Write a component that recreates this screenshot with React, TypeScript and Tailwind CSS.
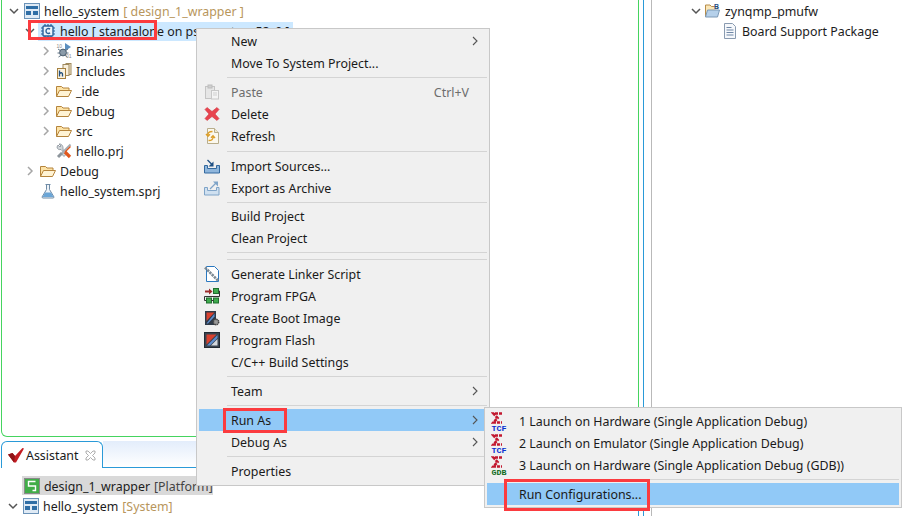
import type { ReactNode } from 'react'

// ── Icons ──────────────────────────────────────────────────────────────────
function Svg({ children }: { children: ReactNode }) {
  return <svg width="16" height="16" viewBox="0 0 16 16" className="shrink-0 block">{children}</svg>
}

const SystemIcon = () => (
  <Svg>
    <rect x="0.5" y="0.5" width="15" height="15" fill="#dfeaf5" stroke="#6c93b8" />
    <rect x="2" y="3" width="12" height="3" fill="#2f6ea6" />
    <rect x="2" y="8" width="5" height="4" fill="#2f6ea6" />
    <rect x="9" y="8" width="5" height="4" fill="#2f6ea6" />
  </Svg>
)

const AppIcon = () => (
  <Svg>
    <path d="M5 1v2M8 1v2M11 1v2M5 13v2M8 13v2M11 13v2M1 5h2M1 8h2M1 11h2M13 5h2M13 8h2M13 11h2" stroke="#2a6099" strokeWidth="1.2" />
    <rect x="3" y="3" width="10" height="10" rx="1" fill="#eef5fb" stroke="#2a6099" strokeWidth="1.4" />
    <path d="M10 6.2C9 5 6 5.2 6 8s3 3 4 1.8" fill="none" stroke="#2a6099" strokeWidth="1.4" />
  </Svg>
)

const BinariesIcon = () => (
  <Svg>
    <path d="M9 0l6 4-6 4z" fill="#5b8fc0" />
    <circle cx="7" cy="9.500" r="3.400" fill="#8a9aa8" stroke="#4d5f6e" />
    <path d="M2 6l3 2M1.500 10h2.500M2.500 14l3-2M12 6L9 8M12.500 10H10M11.500 14l-3-2" stroke="#5e7182" />
    <text x="0.500" y="5" fontSize="5" fill="#8b8b8b" fontFamily="Liberation Sans">10</text>
    <text x="10" y="15" fontSize="5" fill="#8b8b8b" fontFamily="Liberation Sans">01</text>
  </Svg>
)

const IncludesIcon = () => (
  <Svg>
    <rect x="10" y="0.500" width="5" height="11" fill="#f5e9cf" stroke="#a08a5e" />
    <rect x="7" y="1.500" width="6" height="11" fill="#f8efdc" stroke="#a08a5e" />
    <rect x="1.500" y="5.500" width="8" height="10" fill="#fbf3e0" stroke="#a5803f" />
    <path d="M3.500 7.500v6M3.500 10.500c2-1.500 3-.5 3 .5v2.500" fill="none" stroke="#22507f" strokeWidth="1.300" />
  </Svg>
)

const FolderIcon = () => (
  <Svg>
    <path d="M.500 13.500v-10h5l1.500 1.500h6v2.500" fill="#fde3a7" stroke="#b5843c" />
    <path d="M.500 13.500l3-6h12l-3 6z" fill="#fff3d4" stroke="#b5843c" strokeLinejoin="round" />
  </Svg>
)

const WrenchIcon = () => (
  <Svg>
    <path d="M3 1l2 2-1 1-2-2-1 2c0 2 2 3 4 2.500l3 3-2 2 2 2 2-2-1-1-1-1L7 6C7.500 2.500 5 .500 3 1z" fill="#d2d6da" stroke="#7a848e" strokeWidth=".7" />
    <path d="M14.500 1.500L6 10" stroke="#a7aeb5" strokeWidth="2" />
    <path d="M6 10l-4 4" stroke="#8d959c" strokeWidth="3" />
    <path d="M14.500 3.500L9 9" stroke="#e0571e" strokeWidth="1.200" />
    <path d="M9 9l5 5" stroke="#e0571e" strokeWidth="3.200" />
  </Svg>
)

const FlaskIcon = () => (
  <Svg>
    <path d="M5.500 1.500h5M6.500 1.500v5l-4.500 7.500c0 .8.500 1 1 1h10c.5 0 1-.2 1-1l-4.500-7.500v-5" fill="#eef3f8" stroke="#6f8ba6" />
    <path d="M5 9.500h6l2.500 4.500h-11z" fill="#6aa5d6" />
  </Svg>
)

const PasteIcon = () => (
  <Svg>
    <rect x="1.500" y="2.500" width="9" height="12" fill="#e6e6e6" stroke="#c4c4c4" />
    <rect x="4" y="1" width="4" height="3" fill="#d0d0d0" stroke="#bcbcbc" />
    <rect x="7.500" y="6.500" width="7" height="8.500" fill="#f4f4f4" stroke="#c8c8c8" />
    <path d="M9 9h4M9 11h4" stroke="#cfcfcf" />
  </Svg>
)

const DeleteIcon = () => (
  <Svg>
    <path d="M3 1.500L8 5.500l5-4 2 2-4 4.500 4 4.500-2 2-5-4-5 4-2-2 4-4.500-4-4.500z" fill="#e8444f" stroke="#d0363f" strokeWidth=".6" strokeLinejoin="round" />
  </Svg>
)

const RefreshIcon = () => (
  <Svg>
    <path d="M3.500 .500h7l4 4v11h-11z" fill="#fbf8ee" stroke="#b9ae8c" />
    <path d="M10.500 .500v4h4" fill="#f0e7cd" stroke="#b9ae8c" />
    <path d="M8.500 3.500C5 3.500 3.500 5 4 7.500M2 6l2 2.200L6 6.200" fill="none" stroke="#dd9f2a" strokeWidth="1.400" />
    <path d="M4.500 12.500c3.500 0 5-1.500 4.500-4M11 10L9 7.800 7 9.800" fill="none" stroke="#dd9f2a" strokeWidth="1.400" />
  </Svg>
)

const ImportIcon = () => (
  <Svg>
    <path d="M.500 7.500h3v3h9v-3h3v7.500h-15z" fill="#8fb6dc" stroke="#33699f" />
    <path d="M3.500 2l5 5" stroke="#1d4f83" strokeWidth="1.300" />
    <path d="M9.500 3.500v5h-5z" fill="#1d4f83" />
  </Svg>
)

const ExportIcon = () => (
  <Svg>
    <path d="M.500 7.500h3v3h9v-3h2.500v7.500h-14.500z" fill="#cfe0f0" stroke="#7fa4c8" />
    <path d="M6 9l6-6" stroke="#7fa4c8" strokeWidth="1.300" />
    <path d="M9 1.500h5v5z" fill="#7fa4c8" />
  </Svg>
)

const LinkerIcon = () => (
  <Svg>
    <path d="M2.500 .500h8l4 4v11h-12z" fill="#fff" stroke="#2a78c0" />
    <path d="M1 1.500l13 13" stroke="#7d8a94" strokeWidth="2.600" strokeDasharray="2.400 .8" />
  </Svg>
)

const FpgaIcon = () => (
  <Svg>
    <path d="M1 2.500h4V.500l3.500 3-3.500 3v-2h-4z" fill="#9c2b2b" />
    <rect x="9.500" y=".500" width="5" height="5" fill="#3eaa4d" stroke="#1f6f2e" />
    <path d="M14.500 3h1v5.500h-15v4h2" fill="none" stroke="#333" />
    <rect x="2.500" y="10" width="5" height="5" fill="#3eaa4d" stroke="#1f6f2e" />
    <rect x="9.500" y="10" width="5" height="5" fill="#3eaa4d" stroke="#1f6f2e" />
    <path d="M7.500 12.500h2" stroke="#333" />
  </Svg>
)

const BootIcon = () => (
  <Svg>
    <rect x="1" y="1" width="11" height="14" fill="#2f3a48" />
    <path d="M2.500 2.500h8L2.500 11z" fill="#d9412f" />
    <path d="M10.500 3.500v3L4 13.500H2.500z" fill="#5e8ed0" />
    <circle cx="12" cy="12" r="2.700" fill="#9a9a9a" stroke="#444" strokeDasharray="1.500 .6" strokeWidth="1.500" />
  </Svg>
)

const FlashIcon = () => (
  <Svg>
    <rect x=".500" y=".500" width="15" height="15" fill="#3a4450" stroke="#232a33" />
    <path d="M2.500 2.500h10l-10 10z" fill="#d9412f" />
    <path d="M13.500 3v3L6 13.500H3z" fill="#5e8ed0" />
    <path d="M13.500 7v6.500H7z" fill="#d5d9de" />
  </Svg>
)

function SigmaIcon({ label, color }: { label: string; color: string }) {
  return (
    <svg width="16" height="20" viewBox="0 0 16 20" className="shrink-0 block -ml-[2px]">
      <path d="M11 2.500H2.500L6.500 7l-4 4.500h8.500" fill="none" stroke="#c2182f" strokeWidth="2.700" strokeDasharray="3 1" />
      <text x="8" y="19.500" fontSize="8" fontWeight="700" textAnchor="middle" textLength="15" lengthAdjust="spacingAndGlyphs" fill={color} fontFamily="Liberation Mono">{label}</text>
    </svg>
  )
}

const AssistantIcon = () => (
  <Svg>
    <path d="M0 7.500l4.500-1.500 2.500 3L14.500 1l1.500 .5L8 15.500H6z" fill="#c31c22" />
    <path d="M6 15.500L0 7.500l4.500-1.500L7 9z" fill="#8f1417" />
  </Svg>
)

const PlatformIcon = () => (
  <Svg>
    <rect x=".500" y=".500" width="15" height="15" fill="#41ad49" stroke="#8a8a8a" />
    <path d="M11.500 3.500h-7v4.500h7v4.500h-3" fill="none" stroke="#fff" strokeWidth="1.400" />
  </Svg>
)

const BspFolderIcon = () => (
  <Svg>
    <path d="M1.500 14v-12h4.500l1.500 1.500h6v2" fill="#fbe7b8" stroke="#b78d4a" />
    <path d="M1.500 14l2-7h12l-2 7z" fill="#b5d0ea" stroke="#7c99b6" strokeLinejoin="round" />
    <text x="10" y="6" fontSize="7" fontWeight="700" fill="#1f4f86" fontFamily="Liberation Sans">B</text>
  </Svg>
)

const DocIcon = () => (
  <svg width="12" height="16" viewBox="0 0 12 16" className="shrink-0 block">
    <path d="M.500 .500h8l3 3v12h-11z" fill="#f6f8fb" stroke="#8a9bb0" />
    <path d="M2.500 4.500h5M2.500 7h7M2.500 9.500h7M2.500 12h7" stroke="#6f87a6" />
  </svg>
)

function Chevron({ open }: { open?: boolean }) {
  return (
    <svg width="10" height="10" viewBox="0 0 10 10" className="block">
      {open
        ? <path d="M1 3l4 4 4-4" fill="none" stroke="#555" strokeWidth="1.500" />
        : <path d="M3 1l4 4-4 4" fill="none" stroke="#a6a6a6" strokeWidth="1.500" />}
    </svg>
  )
}

const MenuArrow = () => (
  <svg width="6" height="10" viewBox="0 0 6 10" className="block ml-auto mr-[9px] shrink-0">
    <path d="M1 1l4 4-4 4" fill="none" stroke="#555" strokeWidth="1.100" />
  </svg>
)

// ── Tree ───────────────────────────────────────────────────────────────────
function TreeRow({ level = 0, chevron, icon, label, note, selected }: {
  level?: number
  chevron?: 'open' | 'closed'
  icon: ReactNode
  label: string
  note?: string
  selected?: boolean
}) {
  return (
    <div className="flex items-center h-5 whitespace-nowrap" style={{ paddingLeft: 7 + level * 16 }}>
      <div className="w-[15px] shrink-0">{chevron && <Chevron open={chevron === 'open'} />}</div>
      <div className={selected ? 'flex items-center h-[19px] w-[255px] -ml-[2px] pl-[2px] bg-[#cce8ff] overflow-hidden' : 'flex items-center'}>
        {icon}
        <span className="ml-[4px] pt-[2px] text-[#1c1c1c]">{label}</span>
        {note && <span className="ml-1 pt-[2px] text-[#b8965c]">{note}</span>}
      </div>
    </div>
  )
}

// ── Menus ──────────────────────────────────────────────────────────────────
function MenuItem({ icon, label, shortcut, arrow, disabled, active }: {
  icon?: ReactNode
  label: string
  shortcut?: string
  arrow?: boolean
  disabled?: boolean
  active?: boolean
}) {
  return (
    <div className={active ? 'flex items-center h-[22px] bg-[#91c9f7]' : 'flex items-center h-[22px]'}>
      <div className="w-[28px] h-[22px] shrink-0 flex items-center justify-center pr-[3px]">{icon}</div>
      <span className={disabled ? 'ml-1 pt-[2px] text-[#6d6d6d] whitespace-nowrap' : 'ml-1 pt-[2px] text-[#1a1a1a] whitespace-nowrap'}>{label}</span>
      {shortcut && <span className="ml-auto mr-[18px] pt-[2px] text-[#6d6d6d]">{shortcut}</span>}
      {arrow && <MenuArrow />}
    </div>
  )
}

const Sep = () => (
  <div className="h-[7px] ml-[28px] flex items-center">
    <div className="h-px w-full bg-[#d4d4d4]" />
  </div>
)

function ContextMenu() {
  return (
    <div className="absolute left-[196px] top-[28px] w-[294px] h-[458px] bg-[#f0f0f0] border border-[#c8c8c8] px-[2px] pt-px">
      <MenuItem label="New" arrow />
      <MenuItem label="Move To System Project..." />
      <Sep />
      <MenuItem icon={<PasteIcon />} label="Paste" shortcut="Ctrl+V" disabled />
      <MenuItem icon={<DeleteIcon />} label="Delete" />
      <MenuItem icon={<RefreshIcon />} label="Refresh" />
      <div className="h-px" />
      <Sep />
      <MenuItem icon={<ImportIcon />} label="Import Sources..." />
      <MenuItem icon={<ExportIcon />} label="Export as Archive" />
      <div className="-mb-px"><Sep /></div>
      <MenuItem label="Build Project" />
      <MenuItem label="Clean Project" />
      <Sep />
      <Sep />
      <MenuItem icon={<LinkerIcon />} label="Generate Linker Script" />
      <MenuItem icon={<FpgaIcon />} label="Program FPGA" />
      <MenuItem icon={<BootIcon />} label="Create Boot Image" />
      <MenuItem icon={<FlashIcon />} label="Program Flash" />
      <MenuItem label="C/C++ Build Settings" />
      <Sep />
      <MenuItem label="Team" arrow />
      <Sep />
      <MenuItem label="Run As" arrow active />
      <MenuItem label="Debug As" arrow />
      <Sep />
      <MenuItem label="Properties" />
    </div>
  )
}

function RunAsMenu() {
  return (
    <div className="absolute left-[484px] top-[407px] w-[418px] h-[101px] bg-[#f0f0f0] border border-[#c8c8c8] px-[2px] pt-[2px]">
      <MenuItem icon={<SigmaIcon label="TCF" color="#0a2fd0" />} label="1 Launch on Hardware (Single Application Debug)" />
      <MenuItem icon={<SigmaIcon label="TCF" color="#0a2fd0" />} label="2 Launch on Emulator (Single Application Debug)" />
      <MenuItem icon={<SigmaIcon label="GDB" color="#0f6b1c" />} label="3 Launch on Hardware (Single Application Debug (GDB))" />
      <Sep />
      <MenuItem label="Run Configurations..." active />
    </div>
  )
}

const HIGHLIGHT = 'absolute border-[3px] border-[#fb3b3f] pointer-events-none'

export default function App() {
  return (
    <div className="relative w-[922px] h-[516px] overflow-hidden bg-white flex text-[12.4px] leading-5 font-['Noto_Sans',sans-serif]">
      {/* Colonne gauche */}
      <div className="ml-px w-[638px] shrink-0 flex flex-col">
        <div className="h-[437px] shrink-0 border-x border-b border-[#45d45f] rounded-b-md pt-px">
          <TreeRow chevron="open" icon={<SystemIcon />} label="hello_system" note="[ design_1_wrapper ]" />
          <TreeRow level={1} chevron="open" icon={<AppIcon />} label="hello [ standalone on psu_cortexa53_0 ]" selected />
          <TreeRow level={2} chevron="closed" icon={<BinariesIcon />} label="Binaries" />
          <TreeRow level={2} chevron="closed" icon={<IncludesIcon />} label="Includes" />
          <TreeRow level={2} chevron="closed" icon={<FolderIcon />} label="_ide" />
          <TreeRow level={2} chevron="closed" icon={<FolderIcon />} label="Debug" />
          <TreeRow level={2} chevron="closed" icon={<FolderIcon />} label="src" />
          <TreeRow level={2} icon={<WrenchIcon />} label="hello.prj" />
          <TreeRow level={1} chevron="closed" icon={<FolderIcon />} label="Debug" />
          <TreeRow level={1} icon={<FlaskIcon />} label="hello_system.sprj" />
        </div>

        {/* Assistant */}
        <div className="mt-[4px] flex-1 border-r border-[#2a9ad8] min-h-0">
          <div className="flex h-[27px]">
            <div className="w-[102px] shrink-0 flex items-center pl-[6px] border border-b-0 border-[#2a9ad8] rounded-t-md">
              <AssistantIcon />
              <span className="ml-[2px] pt-[2px] text-[#1a1a1a]">Assistant</span>
              <svg width="11" height="11" viewBox="0 0 11 11" className="ml-[7px] block">
                <path d="M1 1h2l2.500 2.500L8 1h2v2L7.500 5.500 10 8v2H8L5.500 7.500 3 10H1V8l2.500-2.500L1 3z" fill="#fff" stroke="#9a9a9a" strokeWidth=".8" />
              </svg>
            </div>
            <div className="flex-1 border-b border-[#2a9ad8] bg-gradient-to-b from-[#e3edfb] to-white" />
          </div>
          <div className="mt-[8px] ml-[21px] w-[191px] h-[19px] flex items-center pl-[2px] bg-[#d9d9d9] whitespace-nowrap">
            <PlatformIcon />
            <span className="ml-[4px] pt-[2px] text-[#1c1c1c]">design_1_wrapper</span>
            <span className="ml-1 pt-[2px] text-[#444]">[Platform]</span>
          </div>
          <div className="mt-px">
            <TreeRow chevron="open" icon={<SystemIcon />} label="hello_system" note="[System]" />
          </div>
        </div>
      </div>

      {/* Filet central */}
      <div className="ml-[4px] w-[9px] shrink-0 border-x border-l-[#2a9ad8] border-r-[#b9b9b9]" />

      {/* Panneau droit */}
      <div className="flex-1 pt-px">
        <div className="flex items-center h-5 pl-[39px] whitespace-nowrap">
          <div className="w-[13px] shrink-0"><Chevron open /></div>
          <BspFolderIcon />
          <span className="ml-[5px] pt-[2px] text-[#1c1c1c]">zynqmp_pmufw</span>
        </div>
        <div className="flex items-center h-5 pl-[72px] whitespace-nowrap">
          <DocIcon />
          <span className="ml-[6px] pt-[2px] text-[#1c1c1c]">Board Support Package</span>
        </div>
      </div>

      <ContextMenu />
      <RunAsMenu />

      <div className={`${HIGHLIGHT} left-[28px] top-[20px] w-[129px] h-[20px]`} />
      <div className={`${HIGHLIGHT} left-[223px] top-[408px] w-[64px] h-[25px]`} />
      <div className={`${HIGHLIGHT} left-[504px] top-[479px] w-[146px] h-[32px]`} />
    </div>
  )
}
